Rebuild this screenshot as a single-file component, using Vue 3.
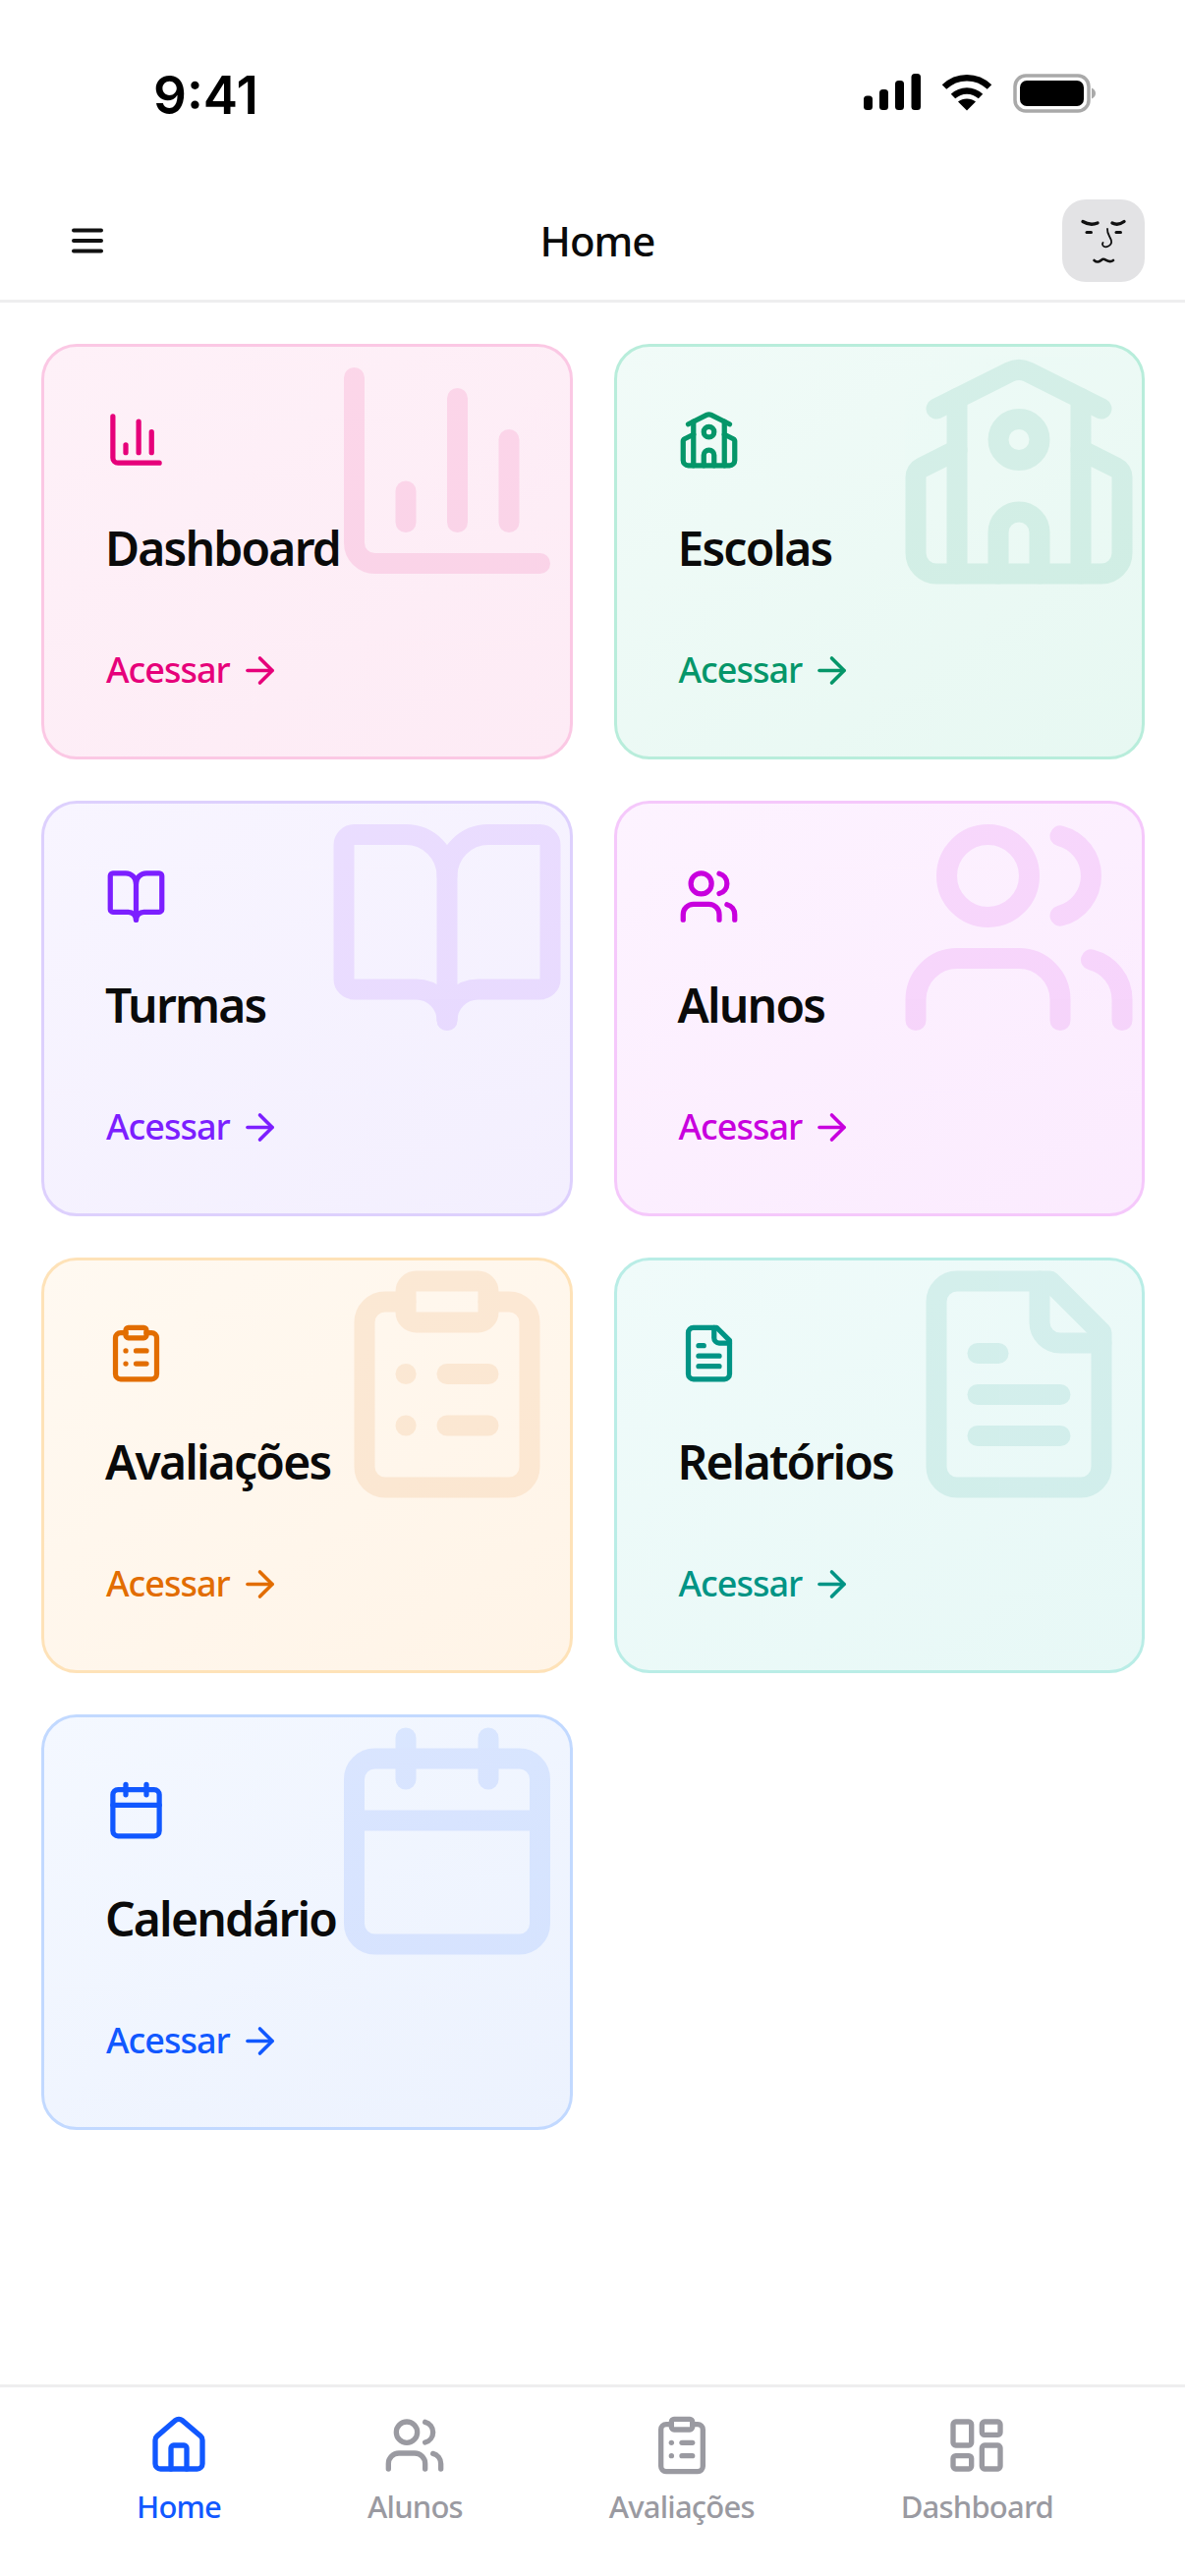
<script setup>
const icons = {
  chart: [
    ['path', { d: 'M3 3v16a2 2 0 0 0 2 2h16' }],
    ['path', { d: 'M18 17V9' }],
    ['path', { d: 'M13 17V5' }],
    ['path', { d: 'M8 17v-3' }]
  ],
  school: [
    ['path', { d: 'M14 22v-4a2 2 0 1 0-4 0v4' }],
    ['path', { d: 'm18 10 3.447 1.724a1 1 0 0 1 .553.894V20a2 2 0 0 1-2 2H4a2 2 0 0 1-2-2v-7.382a1 1 0 0 1 .553-.894L6 10' }],
    ['path', { d: 'M18 5v17' }],
    ['path', { d: 'm4 6 7.106-3.553a2 2 0 0 1 1.788 0L20 6' }],
    ['path', { d: 'M6 5v17' }],
    ['circle', { cx: 12, cy: 9, r: 2 }]
  ],
  book: [
    ['path', { d: 'M12 7v14' }],
    ['path', { d: 'M3 18a1 1 0 0 1-1-1V4a1 1 0 0 1 1-1h5a4 4 0 0 1 4 4 4 4 0 0 1 4-4h5a1 1 0 0 1 1 1v13a1 1 0 0 1-1 1h-6a3 3 0 0 0-3 3 3 3 0 0 0-3-3z' }]
  ],
  users: [
    ['path', { d: 'M16 21v-2a4 4 0 0 0-4-4H6a4 4 0 0 0-4 4v2' }],
    ['path', { d: 'M16 3.128a4 4 0 0 1 0 7.744' }],
    ['path', { d: 'M22 21v-2a4 4 0 0 0-3-3.87' }],
    ['circle', { cx: 9, cy: 7, r: 4 }]
  ],
  clipboard: [
    ['rect', { width: 8, height: 4, x: 8, y: 2, rx: 1, ry: 1 }],
    ['path', { d: 'M16 4h2a2 2 0 0 1 2 2v14a2 2 0 0 1-2 2H6a2 2 0 0 1-2-2V6a2 2 0 0 1 2-2h2' }],
    ['path', { d: 'M12 11h4' }],
    ['path', { d: 'M12 16h4' }],
    ['path', { d: 'M8 11h.01' }],
    ['path', { d: 'M8 16h.01' }]
  ],
  file: [
    ['path', { d: 'M15 2H6a2 2 0 0 0-2 2v16a2 2 0 0 0 2 2h12a2 2 0 0 0 2-2V7Z' }],
    ['path', { d: 'M14 2v4a2 2 0 0 0 2 2h4' }],
    ['path', { d: 'M10 9H8' }],
    ['path', { d: 'M16 13H8' }],
    ['path', { d: 'M16 17H8' }]
  ],
  calendar: [
    ['path', { d: 'M8 2v4' }],
    ['path', { d: 'M16 2v4' }],
    ['rect', { width: 18, height: 18, x: 3, y: 4, rx: 2 }],
    ['path', { d: 'M3 10h18' }]
  ],
  house: [
    ['path', { d: 'M15 21v-8a1 1 0 0 0-1-1h-4a1 1 0 0 0-1 1v8' }],
    ['path', { d: 'M3 10a2 2 0 0 1 .709-1.528l7-5.999a2 2 0 0 1 2.582 0l7 5.999A2 2 0 0 1 21 10v9a2 2 0 0 1-2 2H5a2 2 0 0 1-2-2z' }]
  ],
  layout: [
    ['rect', { width: 7, height: 9, x: 3, y: 3, rx: 1 }],
    ['rect', { width: 7, height: 5, x: 14, y: 3, rx: 1 }],
    ['rect', { width: 7, height: 9, x: 14, y: 12, rx: 1 }],
    ['rect', { width: 7, height: 5, x: 3, y: 16, rx: 1 }]
  ],
  arrow: [
    ['path', { d: 'M5 12h14' }],
    ['path', { d: 'm12 5 7 7-7 7' }]
  ]
}

const cards = [
  { title: 'Dashboard', icon: 'chart', tone: 'pink' },
  { title: 'Escolas', icon: 'school', tone: 'green' },
  { title: 'Turmas', icon: 'book', tone: 'violet' },
  { title: 'Alunos', icon: 'users', tone: 'fuchsia' },
  { title: 'Avaliações', icon: 'clipboard', tone: 'orange' },
  { title: 'Relatórios', icon: 'file', tone: 'teal' },
  { title: 'Calendário', icon: 'calendar', tone: 'blue' }
]

const tabs = [
  { label: 'Home', icon: 'house', active: true },
  { label: 'Alunos', icon: 'users' },
  { label: 'Avaliações', icon: 'clipboard' },
  { label: 'Dashboard', icon: 'layout' }
]
</script>

<template>
  <div class="screen">
    <div class="status-bar">
      <span class="time">9:41</span>
      <div class="status-icons">
        <svg class="signal" width="58" height="37" viewBox="0 0 58 37" fill="#000">
          <rect x="0" y="22.5" width="9" height="14.5" rx="3.5" />
          <rect x="16" y="16" width="9" height="21" rx="3.5" />
          <rect x="32" y="7" width="9" height="30" rx="3.5" />
          <rect x="48.5" y="0" width="9.5" height="37" rx="3.5" />
        </svg>
        <svg class="wifi" width="52" height="38" viewBox="0 0 52 38" fill="none" stroke="#000" stroke-width="6.5">
          <path d="M3 13.5C16 1 36 1 49 13.5" />
          <path d="M12 23C20 15.5 32 15.5 40 23" />
          <path d="M26 37.5 17 28.5C22 24.5 30 24.5 35 28.5Z" fill="#000" stroke="none" />
        </svg>
        <svg class="battery" width="84" height="40" viewBox="0 0 84 40">
          <rect x="2" y="2" width="75" height="36" rx="11" fill="none" stroke="#a9a9a9" stroke-width="3.5" />
          <rect x="7" y="7" width="65" height="26" rx="7" fill="#000" />
          <path d="M80 14.5C82.500 15.5 84 17.5 84 20S82.5 24.5 80 25.5Z" fill="#a9a9a9" />
        </svg>
      </div>
    </div>

    <header class="top-bar">
      <svg class="menu" width="48" height="48" viewBox="0 0 48 48" fill="none" stroke="#111" stroke-width="4" stroke-linecap="round">
        <path d="M10 13.5h28" />
        <path d="M10 24h28" />
        <path d="M10 34.5h28" />
      </svg>
      <h1 class="page-title">Home</h1>
      <div class="avatar">
        <svg width="84" height="84" viewBox="0 0 84 84" fill="none" stroke="#111" stroke-linecap="round">
          <path d="M21 22.5C26 25.500 31 26 36 24" stroke-width="3.4" />
          <path d="M51 24C55 26 59 25.500 63 22.5" stroke-width="3.4" />
          <path d="M25 33.5h4.5" stroke-width="3" />
          <path d="M55 33.5h4.5" stroke-width="3" />
          <path d="M46 30C45.5 35 49 38 50 42 51 47 44 50 41.5 47 40.500 45.5 41 44.5 41.5 44" stroke-width="1.8" />
          <path d="M32.5 62C36 65 38 63 41 61 44 59.500 47 66 52 62" stroke-width="2.6" />
        </svg>
      </div>
    </header>

    <main class="content">
      <div class="card-grid">
        <article v-for="card in cards" :key="card.title" class="card" :class="`card--${card.tone}`">
          <svg class="card-watermark" viewBox="0 0 24 24" fill="none" stroke="currentColor" stroke-width="2" stroke-linecap="round" stroke-linejoin="round">
            <component :is="el[0]" v-for="(el, i) in icons[card.icon]" :key="i" v-bind="el[1]" />
          </svg>
          <svg class="card-icon" viewBox="0 0 24 24" fill="none" stroke="currentColor" stroke-width="2" stroke-linecap="round" stroke-linejoin="round">
            <component :is="el[0]" v-for="(el, i) in icons[card.icon]" :key="i" v-bind="el[1]" />
          </svg>
          <h2 class="card-title">{{ card.title }}</h2>
          <div class="card-link">
            <span>Acessar</span>
            <svg class="card-arrow" viewBox="0 0 24 24" fill="none" stroke="currentColor" stroke-width="2" stroke-linecap="round" stroke-linejoin="round">
              <component :is="el[0]" v-for="(el, i) in icons.arrow" :key="i" v-bind="el[1]" />
            </svg>
          </div>
        </article>
      </div>
    </main>

    <nav class="tab-bar">
      <div v-for="tab in tabs" :key="tab.label" class="tab" :class="{ 'tab--active': tab.active }">
        <svg class="tab-icon" viewBox="0 0 24 24" fill="none" stroke="currentColor" stroke-width="2" stroke-linecap="round" stroke-linejoin="round">
          <component :is="el[0]" v-for="(el, i) in icons[tab.icon]" :key="i" v-bind="el[1]" />
        </svg>
        <span class="tab-label">{{ tab.label }}</span>
      </div>
    </nav>
  </div>
</template>

<style>
html,
body {
  margin: 0;
  background: #fff;
}
</style>

<style scoped>
.screen {
  width: 1206px;
  height: 2622px;
  display: flex;
  flex-direction: column;
  background: #fff;
  font-family: "Noto Sans", "Open Sans", sans-serif;
  color: #0a0a0a;
  overflow: hidden;
}

.status-bar {
  height: 185px;
  box-sizing: border-box;
  padding: 71px 91px 0 156px;
  display: flex;
  justify-content: space-between;
  align-items: flex-start;
  flex-shrink: 0;
}

.time {
  font-family: Inter, sans-serif;
  font-size: 53px;
  line-height: 52px;
  font-weight: 600;
  color: #000;
}

.status-icons {
  display: flex;
  align-items: flex-start;
  gap: 21px;
  margin-top: 4px;
}

.top-bar {
  height: 123px;
  box-sizing: border-box;
  padding: 0 41px 0 65px;
  display: flex;
  align-items: center;
  justify-content: space-between;
  border-bottom: 3px solid #eeeeef;
  flex-shrink: 0;
}

.page-title {
  margin: 0 0 0 22px;
  font-size: 42px;
  line-height: 54px;
  font-weight: 500;
  letter-spacing: -1px;
}

.avatar {
  width: 84px;
  height: 84px;
  border-radius: 24px;
  background: #e3e3e5;
}

.avatar svg {
  display: block;
}

.content {
  flex: 1;
  padding: 42px 41px 0 42px;
}

.card-grid {
  display: grid;
  grid-template-columns: 1fr 1fr;
  column-gap: 42px;
  row-gap: 42px;
}

.card {
  position: relative;
  height: 423px;
  box-sizing: border-box;
  padding: 63px 63px 0;
  border: 3px solid var(--edge);
  border-radius: 36px;
  background: linear-gradient(145deg, var(--from), var(--to));
  color: var(--accent);
  overflow: hidden;
}

.card--pink { --accent: #e6007a; --edge: #fbc8e4; --from: #fef1f8; --to: #fdebf5; }
.card--green { --accent: #059669; --edge: #b8eddb; --from: #f1fbf8; --to: #e7f8f2; }
.card--violet { --accent: #7c1fff; --edge: #ddd0fd; --from: #f8f5ff; --to: #f3effe; }
.card--fuchsia { --accent: #c800de; --edge: #f5c8fb; --from: #fdf3ff; --to: #fbebfe; }
.card--orange { --accent: #e26d00; --edge: #fee2b8; --from: #fff9f1; --to: #fff4e7; }
.card--teal { --accent: #009485; --edge: #b9ede6; --from: #f0fbfa; --to: #e7f8f6; }
.card--blue { --accent: #1158ff; --edge: #c2d9ff; --from: #f4f8ff; --to: #ecf2fe; }

.card-watermark {
  position: absolute;
  top: 0;
  right: -1px;
  width: 252px;
  height: 252px;
  opacity: 0.1;
}

.card-icon {
  display: block;
  width: 63px;
  height: 63px;
  margin-left: -1px;
}

.card-title {
  position: relative;
  margin: 49px 0 0 -1px;
  font-size: 48px;
  line-height: 60px;
  font-weight: 600;
  letter-spacing: -1.8px;
  color: #0a0a0a;
}

.card-link {
  display: flex;
  align-items: center;
  gap: 9px;
  margin-top: 70px;
  font-size: 36px;
  line-height: 48px;
  font-weight: 500;
  letter-spacing: -1px;
}

.card-arrow {
  width: 43px;
  height: 43px;
}

.tab-bar {
  height: 195px;
  box-sizing: border-box;
  padding: 27px 134px 0 139px;
  display: flex;
  justify-content: space-between;
  align-items: flex-start;
  border-top: 3px solid #eeeeef;
  flex-shrink: 0;
}

.tab {
  display: flex;
  flex-direction: column;
  align-items: center;
  gap: 10px;
  color: #9a9aa1;
}

.tab--active {
  color: #1158ff;
}

.tab-icon {
  width: 64px;
  height: 64px;
}

.tab-label {
  font-size: 31px;
  line-height: 40px;
  font-weight: 500;
  letter-spacing: -0.8px;
}
</style>
